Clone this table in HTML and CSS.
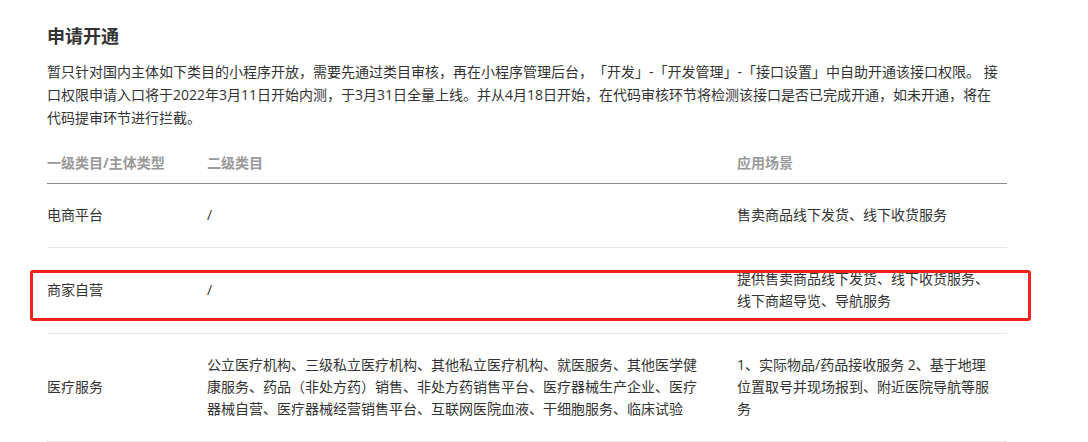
FILE: index.html
```html
<!DOCTYPE html>
<html lang="zh-CN">
<head>
  <meta charset="UTF-8">
  <meta name="viewport" content="width=device-width, initial-scale=1.0">
  <title>申请开通</title>

  <link rel="stylesheet" href="styles.css">
</head>
<body>
  <div class="doc">
    <h2 class="doc-title">申请开通</h2>
    <p class="doc-text">暂只针对国内主体如下类目的小程序开放，需要先通过类目审核，再在小程序管理后台，「开发」-「开发管理」-「接口设置」中自助开通该接口权限。 接口权限申请入口将于2022年3月11日开始内测，于3月31日全量上线。并从4月18日开始，在代码审核环节将检测该接口是否已完成开通，如未开通，将在代码提审环节进行拦截。</p>

    <table class="cat-table">
      <colgroup>
        <col class="col-main">
        <col class="col-sub">
        <col class="col-scene">
      </colgroup>
      <thead>
        <tr>
          <th>一级类目/主体类型</th>
          <th>二级类目</th>
          <th>应用场景</th>
        </tr>
      </thead>
      <tbody>
        <tr>
          <td>电商平台</td>
          <td>/</td>
          <td>售卖商品线下发货、线下收货服务</td>
        </tr>
        <tr>
          <td>商家自营</td>
          <td>/</td>
          <td>提供售卖商品线下发货、线下收货服务、线下商超导览、导航服务</td>
        </tr>
        <tr>
          <td>医疗服务</td>
          <td>公立医疗机构、三级私立医疗机构、其他私立医疗机构、就医服务、其他医学健康服务、药品（非处方药）销售、非处方药销售平台、医疗器械生产企业、医疗器械自营、医疗器械经营销售平台、互联网医院血液、干细胞服务、临床试验</td>
          <td>1、实际物品/药品接收服务 2、基于地理位置取号并现场报到、附近医院导航等服务</td>
        </tr>
      </tbody>
    </table>

    <!-- annotation around the 商家自营 row -->
    <div class="mark"></div>
  </div>
</body>
</html>
```

FILE: styles.css
```css
body {
  margin: 0;
  background: #fff;
  color: #333;
  font-family: "Open Sans", "Noto Sans CJK SC", sans-serif;
  font-size: 14px;
  text-spacing-trim: space-all;
}

.doc {
  position: relative;
  width: 960px;
  margin-left: 47px;
  padding-top: 24px;
}

.doc-title {
  margin: 0 0 12px;
  font-size: 18px;
  line-height: 24px;
  font-weight: bold;
  color: #333;
}

.doc-text {
  width: 955px;
  margin: 0;
  line-height: 23px;
}

.cat-table {
  width: 960px;
  margin-top: 11px;
  border-collapse: collapse;
  table-layout: fixed;
}
.col-main { width: 160px; }
.col-sub { width: 530px; }
.col-scene { width: 270px; }

.cat-table th {
  padding: 12px 0 9px;
  line-height: 22px;
  text-align: left;
  font-weight: bold;
  color: #999;
  border-bottom: 1px solid #8c8c8c;
}

.cat-table td {
  padding: 20px 40px 21px 0;
  line-height: 22px;
  vertical-align: middle;
  border-bottom: 1px solid #e6e6e6;
}
.cat-table td:last-child {
  padding-right: 14px;
}

.mark {
  position: absolute;
  top: 270px;
  left: -17px;
  width: 1001px;
  height: 51px;
  box-sizing: border-box;
  border: 3px solid #f2211b;
  border-radius: 3px;
}
```
